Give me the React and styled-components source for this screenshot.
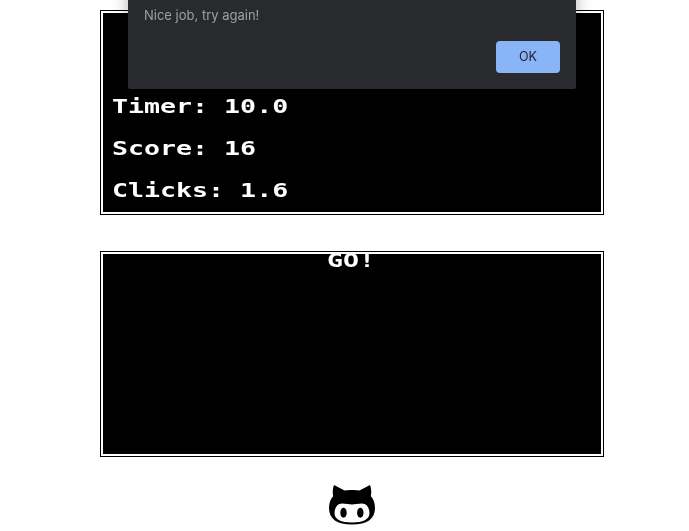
import React from "react";
import styled, { createGlobalStyle } from "styled-components";

const Global = createGlobalStyle`
  html, body { margin: 0; padding: 0; background: #fff; overflow: hidden; }
  #root { width: 689px; height: 531px; }
`;

const Page = styled.div`
  position: relative;
  width: 689px;
  height: 531px;
  overflow: hidden;
  padding: 10px 0 0 100px;
  box-sizing: border-box;
  display: flex;
  flex-direction: column;
  font-family: "DejaVu Sans Mono", monospace;
`;

const Panel = styled.section`
  width: 504px;
  height: ${(p) => p.$h}px;
  margin-bottom: ${(p) => p.$mb}px;
  box-sizing: border-box;
  border: 4px double #000;
  background: #000;
  background-clip: padding-box;
  color: #fff;
  position: relative;
`;

const Stats = styled.div`
  display: flex;
  flex-direction: column;
  gap: 21px;
  padding: 82px 0 0 8px;
  filter: url(#crisp);
`;

const Line = styled.div`
  font-size: 20px;
  font-weight: 700;
  line-height: 21px;
  height: 21px;
  white-space: pre;
  transform: scaleX(1.33);
  transform-origin: left center;
`;

const Centered = styled(Line)`
  text-align: center;
  width: 100%;
  margin: -3px 0 0 -1px;
  line-height: 17px;
  height: 17px;
  transform-origin: center center;
  filter: url(#crisp);
`;

const Logo = styled.svg`
  align-self: flex-start;
  margin-left: 228px;
  width: 48px;
  height: 42px;
  display: block;
`;

const Dialog = styled.div`
  position: absolute;
  left: 128px;
  top: -20px;
  width: 448px;
  height: 109px;
  box-sizing: border-box;
  padding: 26px 16px 16px;
  background: #292a2d;
  border-radius: 2px;
  box-shadow: 0 0 16px rgba(0, 0, 0, 0.3);
  display: flex;
  flex-direction: column;
`;

const Message = styled.p`
  margin: 0;
  font-family: Inter, "Noto Sans", sans-serif;
  font-size: 13px;
  line-height: 18px;
  color: #9aa0a6;
`;

const Actions = styled.div`
  margin-top: auto;
  display: flex;
  justify-content: flex-end;
`;

const OkButton = styled.button`
  width: 64px;
  height: 32px;
  border: 0;
  padding: 0 0 2px;
  border-radius: 4px;
  background: #8ab4f8;
  color: #202124;
  font-family: Inter, "Noto Sans", sans-serif;
  font-size: 12.5px;
`;

export default function App() {
  return (
    <Page>
      <Global />
      <svg width="0" height="0" style={{ position: "absolute" }} aria-hidden="true">
        <filter id="crisp" colorInterpolationFilters="sRGB">
          <feComponentTransfer>
            <feFuncR type="linear" slope="5" intercept="-2" />
            <feFuncG type="linear" slope="5" intercept="-2" />
            <feFuncB type="linear" slope="5" intercept="-2" />
          </feComponentTransfer>
        </filter>
      </svg>
      <Panel $h={205} $mb={36}>
        <Stats>
          <Line>Timer: 10.0</Line>
          <Line>Score: 16</Line>
          <Line>Clicks: 1.6</Line>
        </Stats>
      </Panel>
      <Panel $h={206} $mb={27}>
        <Centered>GO!</Centered>
      </Panel>
      <Logo viewBox="0 0 48 42">
        <path
          fill="#000"
          d="M6 1 L16.5 6.5 C20 5.8 28 5.8 31.5 6.5 L42 1 C43.5 5 43.5 9 42.8 12 C45.5 15 47 19 47 24 C47 35 39 40.5 24 40.5 C9 40.5 1 35 1 24 C1 19 2.5 15 5.2 12 C4.5 9 4.5 5 6 1 Z"
        />
        <path
          fill="#fff"
          d="M14 19.5 C18 19.5 21 20.5 24 20.5 C27 20.5 30 19.5 34 19.5 C38.5 19.5 41.5 24 41.5 29 C41.5 35.5 35 38.5 24 38.5 C13 38.5 6.5 35.5 6.5 29 C6.5 24 9.5 19.5 14 19.5 Z"
        />
        <ellipse cx="15.5" cy="28.8" rx="3.2" ry="5" fill="#000" />
        <ellipse cx="32.3" cy="28.8" rx="3.2" ry="5" fill="#000" />
      </Logo>
      <Dialog>
        <Message>Nice job, try again!</Message>
        <Actions>
          <OkButton>OK</OkButton>
        </Actions>
      </Dialog>
    </Page>
  );
}
